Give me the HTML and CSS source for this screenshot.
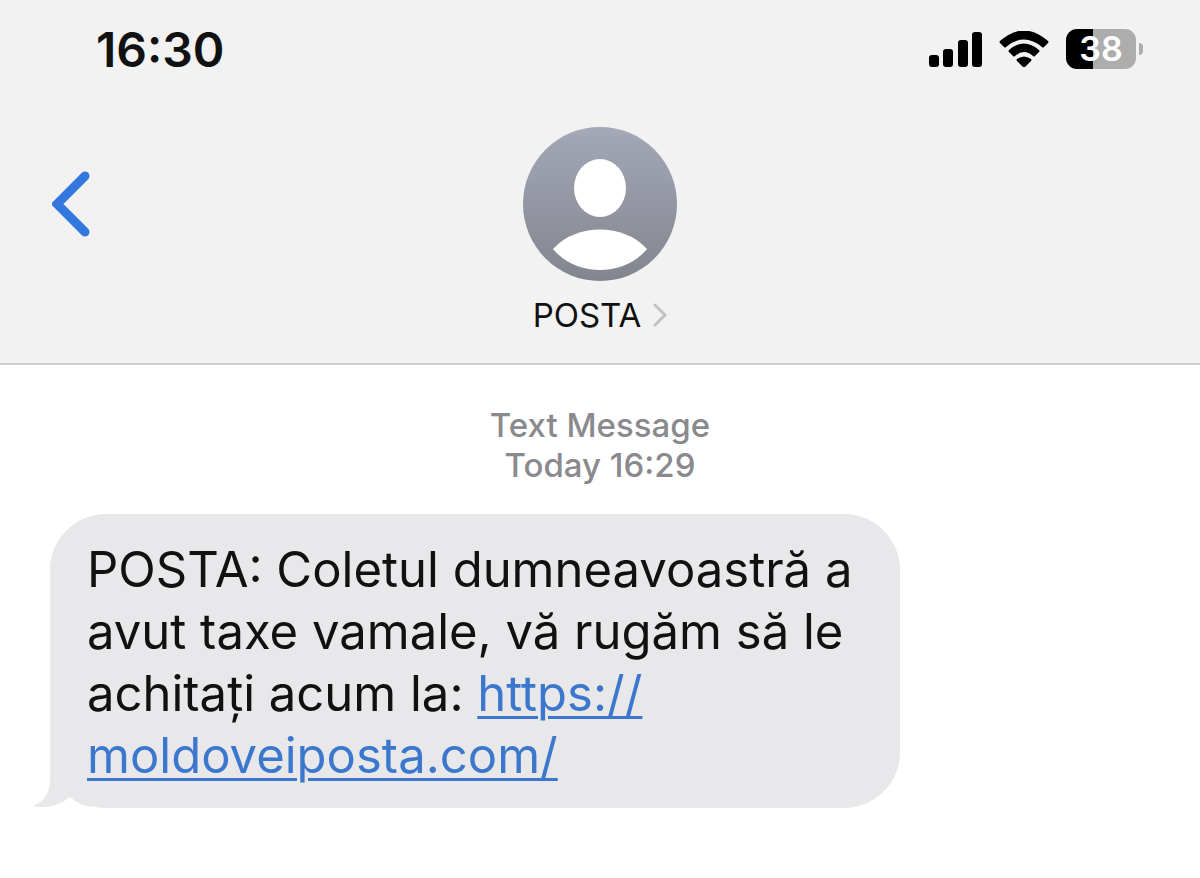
FILE: index.html
```html
<!DOCTYPE html>
<html lang="ro">
<head>
  <meta charset="UTF-8">
  <meta name="viewport" content="width=device-width, initial-scale=1">
  <title>POSTA</title>
  <link rel="stylesheet" href="styles.css">
</head>
<body>
  <header class="header">
    <div class="status-bar">
      <time class="clock">16:30</time>
      <div class="status-icons">
        <svg class="signal" width="53" height="36" viewBox="0 0 53 36" aria-hidden="true">
          <rect x="0" y="24" width="10" height="12" rx="3"/>
          <rect x="14" y="18" width="10" height="18" rx="3"/>
          <rect x="29" y="9" width="10" height="27" rx="3"/>
          <rect x="43" y="1" width="10" height="35" rx="3"/>
        </svg>
        <svg class="wifi" width="50" height="36" viewBox="0 0 50 36" aria-hidden="true">
          <path d="M1 10Q25 -11 49 10Q50 11 49 12L45 16Q44 17 43 16Q25 1 7 16Q6 17 5 16L1 12Q0 11 1 10Z"/>
          <path d="M10 19Q25 6 40 19Q41 20 40 21L36 25Q35 26 34 25Q25 17 16 25Q15 26 14 25L10 21Q9 20 10 19Z"/>
          <path d="M18 28Q25 23 32 28Q33 29 32 30L26 36Q25 37 24 36L18 30Q17 29 18 28Z"/>
        </svg>
        <div class="battery"><span class="battery-level">38</span></div>
      </div>
    </div>

    <nav class="nav">
      <button class="back" aria-label="Back">
        <svg width="40" height="66" viewBox="0 0 40 66" aria-hidden="true">
          <path d="M33 5L5 33L33 61"/>
        </svg>
      </button>
      <button class="contact">
        <svg class="avatar" width="154" height="154" viewBox="0 0 154 154" aria-hidden="true">
          <defs>
            <linearGradient id="avatarFill" x1="0" y1="0" x2="0" y2="1">
              <stop offset="0" stop-color="#a4a8b7"/>
              <stop offset="1" stop-color="#83858e"/>
            </linearGradient>
          </defs>
          <circle cx="77" cy="77" r="77" fill="url(#avatarFill)"/>
          <ellipse cx="77" cy="61" rx="26" ry="29" fill="#fff"/>
          <path d="M30 122C53 96 101 96 124 122C101 150 53 150 30 122Z" fill="#fff"/>
        </svg>
        <span class="contact-name">
          POSTA
          <svg class="chevron" width="14" height="24" viewBox="0 0 14 24" aria-hidden="true">
            <path d="M2 2L12 12L2 22"/>
          </svg>
        </span>
      </button>
    </nav>
  </header>

  <main class="thread">
    <p class="stamp">Text Message<br>Today 16:29</p>
    <div class="bubble">
      POSTA: Coletul dumneavoastră a avut taxe vamale, vă rugăm să le achitați acum la: <a href="#">https://<wbr>moldoveiposta.com/</a>
      <svg class="tail" width="60" height="60" viewBox="0 0 60 60" aria-hidden="true">
        <path d="M17 0V34C16 46 11 54 0 58C14 61 27 57 37 49C43 54 50 58 60 59V0Z"/>
      </svg>
    </div>
  </main>
</body>
</html>
```

FILE: styles.css
```css
* {
  box-sizing: border-box;
}

body {
  margin: 0;
  background-color: #fff;
  color: #111;
  font-family: Inter, "Liberation Sans", sans-serif;
}

button {
  padding: 0;
  border: none;
  background: none;
  color: inherit;
  font-family: inherit;
  cursor: pointer;
}

.header {
  padding: 19px 52px 28px;
  background-color: #f2f2f2;
  border-bottom: 2px solid #cfcfcf;
}

/* status bar */
.status-bar {
  display: flex;
  justify-content: space-between;
  align-items: center;
  height: 60px;
  padding: 0 12px 0 44px;
}

.clock {
  font-size: 48px;
  font-weight: 600;
}

.status-icons {
  display: flex;
  align-items: center;
  gap: 17px;
}

.battery {
  position: relative;
  width: 70px;
  height: 40px;
  border-radius: 11px;
  background: linear-gradient(to right, #000 38%, #adadad 38%);
  text-align: center;
}

.battery::after {
  content: "";
  position: absolute;
  top: 14px;
  right: -7px;
  width: 4px;
  height: 12px;
  border-radius: 0 4px 4px 0;
  background-color: #adadad;
}

.battery-level {
  color: #fff;
  font-size: 34px;
  font-weight: 600;
  line-height: 40px;
}

/* contact row */
.nav {
  display: grid;
  grid-template-columns: 1fr auto 1fr;
  margin-top: 48px;
}

.back {
  justify-self: start;
  align-self: start;
  display: flex;
  margin-top: 44px;
}

.back path {
  fill: none;
  stroke: #3478de;
  stroke-width: 9;
  stroke-linecap: round;
}

.contact {
  display: flex;
  flex-direction: column;
  align-items: center;
  gap: 14px;
}

.contact-name {
  display: flex;
  align-items: center;
  gap: 12px;
  font-size: 33px;
  line-height: 40px;
}

.chevron path {
  fill: none;
  stroke: #c2c2c4;
  stroke-width: 3;
  stroke-linecap: round;
}

/* messages */
.thread {
  padding: 40px 50px;
}

.stamp {
  margin: 0 0 29px;
  color: #8a8a8e;
  font-size: 33px;
  font-weight: 500;
  line-height: 40px;
  text-align: center;
}

.bubble {
  position: relative;
  isolation: isolate;
  width: fit-content;
  max-width: 850px;
  padding: 25px 37px 21px;
  border-radius: 56px;
  background-color: #e8e8ea;
  font-size: 49px;
  line-height: 62px;
}

.bubble a {
  color: #3b78cd;
  text-decoration-thickness: 3px;
  text-underline-offset: 5px;
}

/* sits under the text, over the bubble's corner */
.tail {
  position: absolute;
  z-index: -1;
  left: -17px;
  bottom: 0;
  fill: #e8e8ea;
}
```
